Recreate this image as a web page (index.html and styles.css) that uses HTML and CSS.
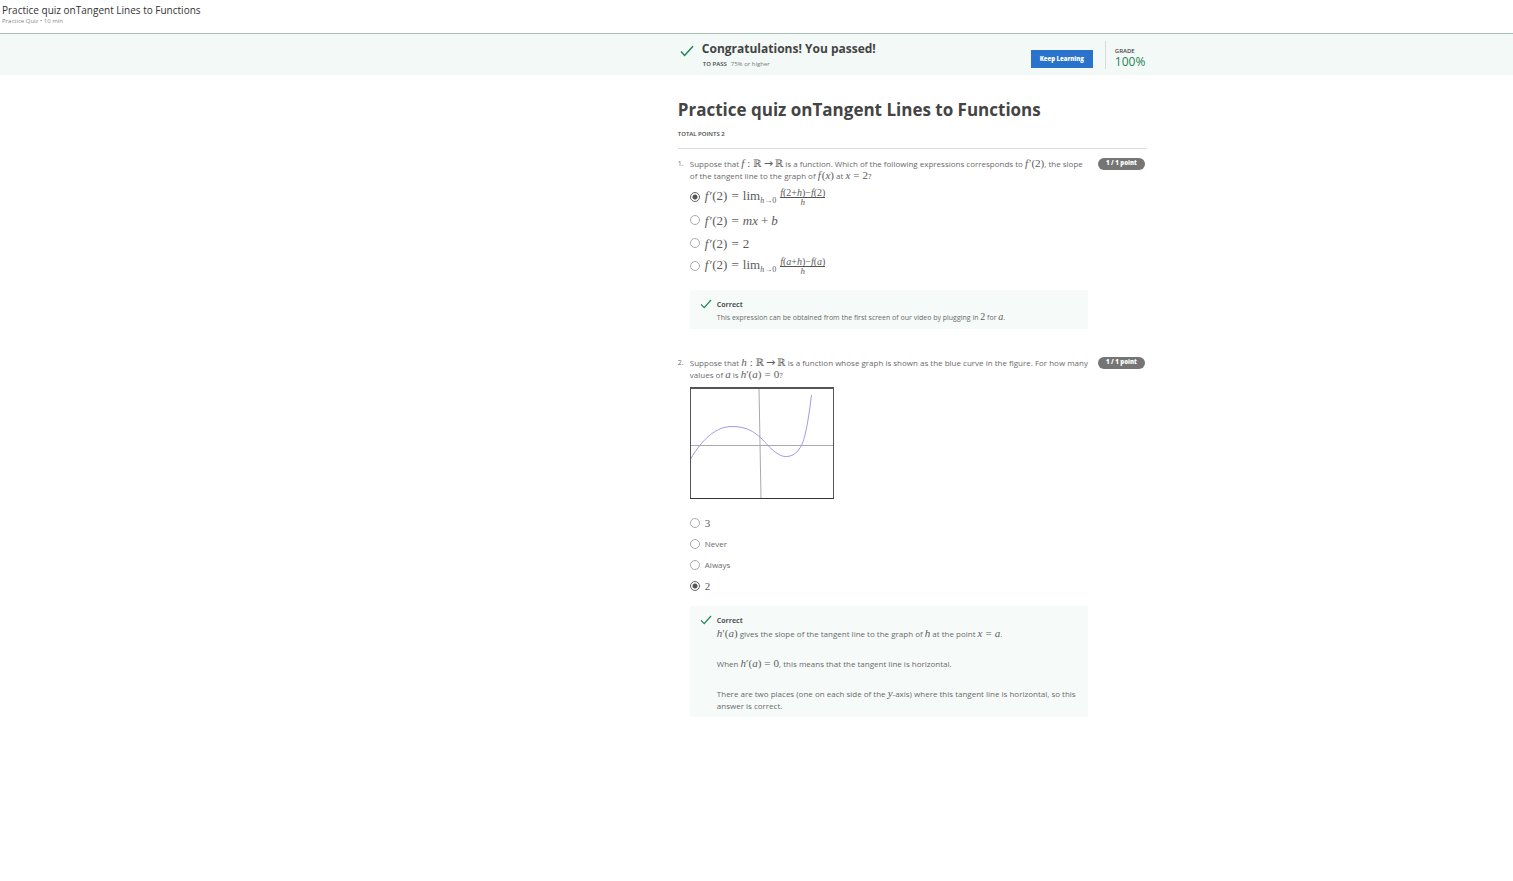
FILE: index.html
```html
<!DOCTYPE html>
<html lang="en">
<head>
<meta charset="utf-8">
<title>Practice quiz onTangent Lines to Functions</title>
<link rel="stylesheet" href="styles.css">
</head>
<body>
<header class="topbar">
  <p class="topbar-title">Practice quiz onTangent Lines to Functions</p>
  <p class="topbar-meta">Practice Quiz • 10 min</p>
</header>
<section class="banner">
  <div class="banner-inner">
    <svg class="banner-check" viewBox="0 0 14 12" aria-hidden="true"><path d="M1 6.6 4.6 10.4 13 1.2"/></svg>
    <div class="banner-text">
      <h2 class="banner-title">Congratulations! You passed!</h2>
      <p class="banner-pass"><b>TO PASS</b><span>75% or higher</span></p>
    </div>
    <button class="keep" type="button">Keep Learning</button>
    <div class="grade"><span class="grade-label">GRADE</span><span class="grade-value">100%</span></div>
  </div>
</section>
<main class="quiz">
  <h1 class="quiz-title">Practice quiz onTangent Lines to Functions</h1>
  <p class="total">TOTAL POINTS 2</p>

  <section class="question">
    <span class="number">1.</span>
    <div class="body">
      <p class="prompt" id="q1">Suppose that <span class="math"><i>f</i><span class="rel">:</span><span class="set">ℝ</span><span class="arrow">→</span><span class="set">ℝ</span></span> is a function. Which of the following expressions corresponds to <span class="math"><i class="f">f</i>′(2)</span>, the slope<br>of the tangent line to the graph of <span class="math"><i class="f">f</i>(<i>x</i>)</span> at <span class="math"><i>x</i><span class="rel">=</span>2</span>?</p>
      <div class="options formulas" role="radiogroup" aria-labelledby="q1">
        <label class="option"><input type="radio" name="q1" checked><span class="math"><i class="f">f</i>′(2)<span class="rel">=</span>lim<span class="sub"><i>h</i>→0</span><span class="frac"><span class="num"><i>f</i>(2+<i>h</i>)−<i>f</i>(2)</span><span class="den"><i>h</i></span></span></span></label>
        <label class="option"><input type="radio" name="q1"><span class="math"><i class="f">f</i>′(2)<span class="rel">=</span><i>mx</i><span class="op">+</span><i>b</i></span></label>
        <label class="option"><input type="radio" name="q1"><span class="math"><i class="f">f</i>′(2)<span class="rel">=</span>2</span></label>
        <label class="option"><input type="radio" name="q1"><span class="math"><i class="f">f</i>′(2)<span class="rel">=</span>lim<span class="sub"><i>h</i>→0</span><span class="frac"><span class="num"><i>f</i>(<i>a</i>+<i>h</i>)−<i>f</i>(<i>a</i>)</span><span class="den"><i>h</i></span></span></span></label>
      </div>
      <div class="feedback">
        <svg class="check" viewBox="0 0 12 10" aria-hidden="true"><path d="M1 5.4 4.2 8.6 11 1"/></svg>
        <div>
          <h3 class="verdict">Correct</h3>
          <p class="reason small">This expression can be obtained from the first screen of our video by plugging in <span class="math">2</span> for <span class="math"><i>a</i></span>.</p>
        </div>
      </div>
    </div>
    <span class="points">1 / 1 point</span>
  </section>

  <section class="question">
    <span class="number">2.</span>
    <div class="body">
      <p class="prompt" id="q2">Suppose that <span class="math"><i>h</i><span class="rel">:</span><span class="set">ℝ</span><span class="arrow">→</span><span class="set">ℝ</span></span> is a function whose graph is shown as the blue curve in the figure. For how many<br>values of <span class="math"><i>a</i></span> is <span class="math"><i>h</i>′(<i>a</i>)<span class="rel">=</span>0</span>?</p>
      <svg class="graph" viewBox="0 0 144 112" role="img" aria-label="Graph of h">
        <path class="axis" d="M0 58.5H144M69 1 71 111"/>
        <path class="curve" d="M.5 72C13 51 27 39 43 39.500C65 40 72 53 81 61.500C88 68 93 70 97 69.500C106 69 112 61 115 48C118 36 120 20 121.500 8"/>
        <path class="side" d="M.5 1V111M143.500 1V111"/>
        <path class="top" d="M0 1H144"/><path class="bottom" d="M0 111.500H144"/>
      </svg>
      <div class="options" role="radiogroup" aria-labelledby="q2">
        <label class="option"><input type="radio" name="q2"><span class="math">3</span></label>
        <label class="option"><input type="radio" name="q2"><span>Never</span></label>
        <label class="option"><input type="radio" name="q2"><span>Always</span></label>
        <label class="option"><input type="radio" name="q2" checked><span class="math">2</span></label>
      </div>
      <div class="feedback">
        <svg class="check" viewBox="0 0 12 10" aria-hidden="true"><path d="M1 5.4 4.2 8.6 11 1"/></svg>
        <div>
          <h3 class="verdict">Correct</h3>
          <p class="reason"><span class="math"><i>h</i>′(<i>a</i>)</span> gives the slope of the tangent line to the graph of <span class="math"><i>h</i></span> at the point <span class="math"><i>x</i><span class="rel">=</span><i>a</i></span>.</p>
          <p class="reason">When <span class="math"><i>h</i>′(<i>a</i>)<span class="rel">=</span>0</span>, this means that the tangent line is horizontal.</p>
          <p class="reason">There are two places (one on each side of the <span class="math"><i>y</i></span>-axis) where this tangent line is horizontal, so this<br>answer is correct.</p>
        </div>
      </div>
    </div>
    <span class="points">1 / 1 point</span>
  </section>
</main>
</body>
</html>
```
FILE: styles.css
```css
* { box-sizing: border-box; }
body { margin: 0; background: #fff; color: #6a6a6a; font: 8px/12px "Open Sans", "Noto Sans", sans-serif; }
h1, h2, h3, p { margin: 0; }
.topbar { height: 34px; padding: 3px 2px 0; border-bottom: 1px solid #a9bfb9; }
.topbar-title { font-size: 10px; line-height: 15px; color: #333; }
.topbar-meta { font-size: 6px; line-height: 6px; color: #888; }
.banner { background: #f3f9f7; }
.banner-inner { display: flex; align-items: flex-start; max-width: 469px; height: 41px; margin-left: 44.8%; padding-top: 7px; }
.banner-check { width: 14px; height: 12px; margin: 4px 8px 0 2px; fill: none; stroke: #1f8354; stroke-width: 1.5; }
.banner-text { flex: 1; }
.banner-title { font-size: 12px; line-height: 16px; font-weight: 700; color: #444; }
.banner-pass { display: flex; gap: 4px; padding: 3px 0 0 1px; font-size: 6px; line-height: 8px; color: #777; }
.banner-pass b { font-weight: 600; color: #444; }
.keep { width: 62px; height: 18px; margin: 9px 12px 0 0; padding: 0; border: 0; background: #2a73cc; color: #fff; font: 800 6px/18px "Open Sans", sans-serif; }
.grade { display: flex; flex-direction: column; width: 42px; height: 28px; padding: 6px 0 0 9px; border-left: 1px solid #d5dedb; }
.grade-label { font-size: 6px; line-height: 8px; font-weight: 600; color: #444; }
.grade-value { font-size: 12px; line-height: 14px; color: #1f8354; }
.quiz { max-width: 469px; margin-left: 44.8%; padding-top: 22px; }
.quiz-title { font-size: 17px; line-height: 26px; font-weight: 700; color: #444; white-space: nowrap; }
.total { padding: 6px 0 9px; border-bottom: 1px solid #ddd; font-size: 6px; line-height: 10px; font-weight: 600; color: #444; }
.question { display: grid; grid-template-columns: 12px minmax(0, 398px) 57px; padding-top: 9px; }
.question + .question { padding-top: 28px; }
.number { font-size: 7px; line-height: 12px; }
.points { margin-left: 10px; width: 47px; height: 12px; border-radius: 6px; background: #757575; color: #fff; font-size: 6px; line-height: 11px; font-weight: 800; text-align: center; }
.prompt { white-space: nowrap; }
.math { font-family: "Liberation Serif", "DejaVu Serif", serif; font-size: 11px; line-height: 0; white-space: nowrap; color: #5c5c5c; }
.rel { margin: 0 3px; }
.op { margin: 0 3px; }
.set { font-size: 10px; }
.arrow { margin: 0 2px; font-family: "DejaVu Sans", sans-serif; font-size: 11px; }
.f { margin-right: 1px; }
.options { display: flex; flex-direction: column; gap: 9px; padding: 18px 0 14px; }
.option { display: flex; align-items: center; gap: 5px; height: 12px; }
.option input { appearance: none; flex: none; width: 10px; height: 10px; margin: 0; border: 1px solid #aaa; border-radius: 50%; }
.option input:checked { border-color: #666; background: radial-gradient(circle, #555 0 2px, transparent 3px); }
.option .math { line-height: 12px; }
.formulas { gap: 11px; padding: 9px 0 18px; }
.formulas .math { padding-top: 1px; font-size: 13px; }
.formulas .rel { margin: 0 4px; }
.math .sub { font-size: 8px; line-height: 0; vertical-align: -3px; }
.frac { display: inline-flex; flex-direction: column; align-items: center; margin-left: 4px; font-size: 10px; line-height: 8px; vertical-align: middle; }
.num { border-bottom: 1px solid #555; }
.den { font-size: 9px; line-height: 8px; }
.feedback { display: flex; gap: 5px; padding: 8px 10px 5px; background: #f6fbf9; }
.check { flex: none; width: 12px; height: 10px; margin-top: 1px; fill: none; stroke: #1f8354; stroke-width: 1.2; }
.verdict { font-size: 7px; line-height: 14px; font-weight: 700; color: #555; }
.reason { white-space: nowrap; }
.reason + .reason { margin-top: 18px; }
.small { font-size: 7px; }
.small .math { font-size: 10px; }
.graph { display: block; width: 144px; height: 112px; margin-top: 6px; fill: none; }
.axis { stroke: #aaa; }
.curve { stroke: #a09be6; }
.side { stroke: #555; }
.top { stroke: #555; stroke-width: 2; }
.bottom { stroke: #333; }
```
